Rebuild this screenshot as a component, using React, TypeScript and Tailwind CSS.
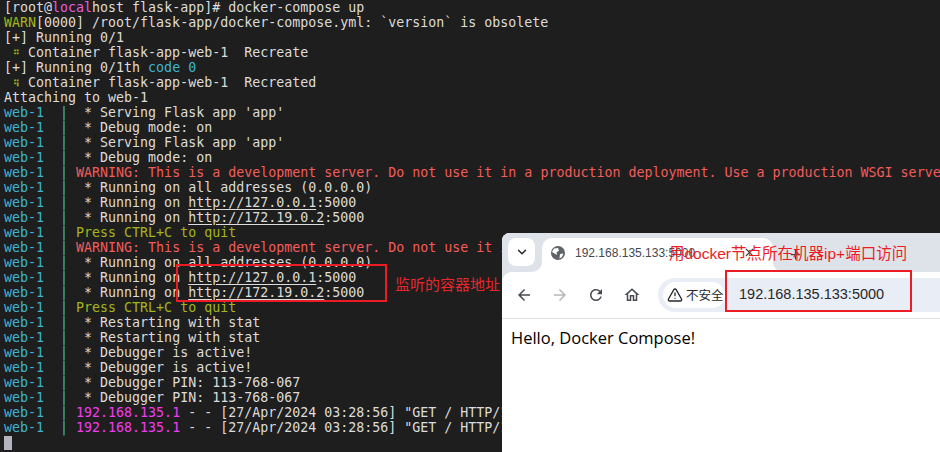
import { ChevronDown, Plus, TriangleAlert, X } from 'lucide-react';

function Web({ children, className = '' }: { children: React.ReactNode; className?: string }) {
  return (
    <div className="h-[15px]">
      <span className="text-[#3fb4d2]">web-1  | </span>
      <span className={className}>{children}</span>
    </div>
  );
}

function Url({ children }: { children: React.ReactNode }) {
  return <span className="underline underline-offset-2">{children}</span>;
}

function Spin({ children }: { children: React.ReactNode }) {
  return <span className="inline-block w-2 text-center text-[9px] font-bold leading-[15px] text-[#a5b51e]">{children}</span>;
}

const RED = 'text-[#f25c5c]';
const OLIVE = 'text-[#a5b51e]';
const warning = 'WARNING: This is a development server. Do not use it in a production deployment. Use a production WSGI server instead.';

function Terminal() {
  return (
    <div className="whitespace-pre px-1 font-['DejaVu_Sans_Mono',monospace] text-[13.3px] leading-[15px] text-[#dcdcdc]">
      <div className="h-[15px]">[root@<span className="text-[#e85ce0]">local</span>host flask-app]# docker-compose up</div>
      <div className="h-[15px]"><span className={OLIVE}>WARN</span>[0000] /root/flask-app/docker-compose.yml: `version` is obsolete</div>
      <div className="h-[15px]">[+] Running 0/1</div>
      <div className="h-[15px]"> <Spin>⠛</Spin> Container flask-app-web-1  Recreate</div>
      <div className="h-[15px]">[+] Running 0/1th <span className="text-[#3fb4d2]">code 0</span></div>
      <div className="h-[15px]"> <Spin>⠻</Spin> Container flask-app-web-1  Recreated</div>
      <div className="h-[15px]">Attaching to web-1</div>
      <Web> * Serving Flask app 'app'</Web>
      <Web> * Debug mode: on</Web>
      <Web> * Serving Flask app 'app'</Web>
      <Web> * Debug mode: on</Web>
      <Web className={RED}>{warning}</Web>
      <Web> * Running on all addresses (0.0.0.0)</Web>
      <Web> * Running on <Url>http://127.0.0.1</Url>:5000</Web>
      <Web> * Running on <Url>http://172.19.0.2</Url>:5000</Web>
      <Web className={OLIVE}>Press CTRL+C to quit</Web>
      <Web className={RED}>{warning}</Web>
      <Web> * Running on all addresses (0.0.0.0)</Web>
      <Web> * Running on <Url>http://127.0.0.1</Url>:5000</Web>
      <Web> * Running on <Url>http://172.19.0.2</Url>:5000</Web>
      <Web className={OLIVE}>Press CTRL+C to quit</Web>
      <Web> * Restarting with stat</Web>
      <Web> * Restarting with stat</Web>
      <Web> * Debugger is active!</Web>
      <Web> * Debugger is active!</Web>
      <Web> * Debugger PIN: 113-768-067</Web>
      <Web> * Debugger PIN: 113-768-067</Web>
      <Web><span className="text-[#f03cf0]">192.168.135.1</span> - - [27/Apr/2024 03:28:56] "GET / HTTP/1.1" 200 -</Web>
      <Web><span className="text-[#f03cf0]">192.168.135.1</span> - - [27/Apr/2024 03:28:56] "GET / HTTP/1.1" 200 -</Web>
      <div className="mt-[1px] h-[14px] w-2 bg-[#b4b4be]" />
    </div>
  );
}

function NavIcon({ d, color = '#474a4f' }: { d: string; color?: string }) {
  return (
    <div className="flex w-[36px] shrink-0 justify-center">
      <svg width="18" height="18" viewBox="0 0 24 24" fill={color}>
        <path d={d} />
      </svg>
    </div>
  );
}

function Browser() {
  return (
    <div className="absolute left-[502px] top-[233px] flex h-[219px] w-[438px] flex-col overflow-hidden rounded-tl-[8px] bg-[#dee3ea] font-['Liberation_Sans',sans-serif]">
      <div className="flex h-[39px] shrink-0 bg-white">
        <div className="w-[40px] shrink-0 rounded-br-[10px] bg-[#dee3ea] pl-[6px] pt-[5px]">
          <div className="flex h-[28px] w-[27px] items-center justify-center rounded-[8px] bg-white">
            <ChevronDown size={14} strokeWidth={2.5} className="text-[#26282c]" />
          </div>
        </div>
        <div className="w-[231px] shrink-0 bg-[#dee3ea] pt-[5px]">
          <div className="flex h-[34px] items-center rounded-t-[10px] bg-white pb-[5px] pl-[9px]">
            <svg width="14" height="14" viewBox="0 0 14 14">
              <circle cx="7" cy="7" r="7" fill="#5f6368" />
              <path d="M3 2.5 L7 2 L8 4.5 L5.5 6.5 L6 9 L3.5 7.5 L1 6 Z M9 8 L12.5 7.5 L11 11 L8.5 12.5 Z" fill="#fff" />
            </svg>
            <span className="ml-[10px] text-[12px] text-[#45484d]">192.168.135.133:5000</span>
            <X size={13} strokeWidth={2} className="ml-[48px] text-[#3c4043]" />
          </div>
        </div>
        <div className="flex-1 rounded-bl-[10px] bg-[#dee3ea] pl-[15px] pt-[14px]">
          <Plus size={15} strokeWidth={2} className="text-[#3c4043]" />
        </div>
      </div>
      <div className="flex h-[47px] shrink-0 items-center rounded-tl-[10px] border-b border-[#e2e3e5] bg-white pl-[4px]">
        <NavIcon d="M20 11H7.83l5.59-5.59L12 4l-8 8 8 8 1.41-1.41L7.83 13H20v-2z" />
        <NavIcon color="#b4b6b9" d="M4 11h12.17l-5.59-5.59L12 4l8 8-8 8-1.41-1.41L16.17 13H4v-2z" />
        <NavIcon d="M17.65 6.35A7.958 7.958 0 0 0 12 4c-4.42 0-7.99 3.58-7.99 8s3.57 8 7.99 8c3.73 0 6.84-2.55 7.73-6h-2.08A5.99 5.99 0 0 1 12 18c-3.31 0-6-2.69-6-6s2.69-6 6-6c1.66 0 3.14.69 4.22 1.78L13 11h7V4l-2.35 2.35z" />
        <NavIcon d="M12 5.69l5 4.5V18h-2v-6H9v6H7v-7.81l5-4.5M12 3L2 12h3v8h6v-6h2v6h6v-8h3L12 3z" />
        <div className="ml-[8px] flex h-[34px] flex-1 items-center rounded-l-full bg-[#e9edf6] pl-[5px]">
          <div className="flex h-[26px] w-[62px] shrink-0 items-center rounded-full bg-white pl-[4px]">
            <TriangleAlert size={16} strokeWidth={2} className="text-[#26282c]" />
            <span className="ml-[3px] font-['Noto_Sans_CJK_SC',sans-serif] text-[12.5px] text-[#26282c]">不安全</span>
          </div>
          <span className="ml-[14px] text-[14.5px] text-[#26282c]">192.168.135.133:5000</span>
        </div>
      </div>
      <div className="flex-1 bg-white pl-[9px] pt-[8px] font-['Open_Sans',sans-serif] text-[16.5px] leading-[22px] text-black">Hello, Docker Compose!</div>
    </div>
  );
}

export default function App() {
  return (
    <div className="relative h-[452px] w-[940px] overflow-hidden bg-[#1e1e1e]">
      <Terminal />
      <Browser />
      {/* annotations */}
      <div className="absolute left-[176px] top-[264px] h-[38px] w-[211px] border-2 border-[#ed1c24]" />
      <div className="absolute left-[395px] top-[275px] font-['Noto_Sans_CJK_SC',sans-serif] text-[15px] leading-[18px] text-[#e8262c]">监听的容器地址</div>
      <div className="absolute left-[725px] top-[270px] h-[42px] w-[187px] border-2 border-[#ed1c24]" />
      <div className="absolute left-[669px] top-[244px] font-['Liberation_Sans','Noto_Sans_CJK_SC',sans-serif] text-[15.5px] leading-[20px] text-[#ed1c24]">用docker节点所在机器ip+端口访问</div>
    </div>
  );
}
